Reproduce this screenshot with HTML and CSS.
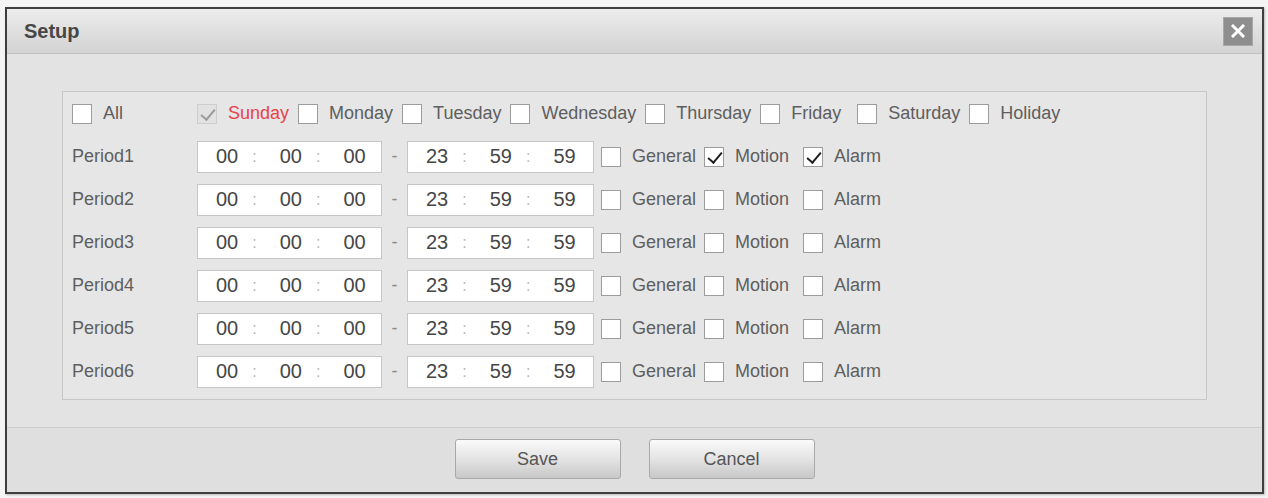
FILE: index.html
```html
<!DOCTYPE html>
<html lang="en">
<head>
    <meta charset="UTF-8">
    <title>Setup</title>
    <link rel="stylesheet" href="styles.css">
</head>
<body>
    <div class="dialog">
        <div class="dialog-head">
            <h1>Setup</h1>
            <button class="close-btn" type="button">
                <svg width="14" height="14" viewBox="0 0 14 14">
                    <path d="M2 2 L12 12 M12 2 L2 12" stroke="#fff" stroke-width="3" stroke-linecap="square"/>
                </svg>
            </button>
        </div>

        <div class="dialog-body">
            <div class="panel">
                <div class="row days">
                    <div class="row-label">
                        <label class="check-item"><span class="box"></span>All</label>
                    </div>
                    <label class="check-item"><span class="box disabled checked"></span><span class="today">Sunday</span></label>
                    <label class="check-item"><span class="box"></span>Monday</label>
                    <label class="check-item"><span class="box"></span>Tuesday</label>
                    <label class="check-item"><span class="box"></span>Wednesday</label>
                    <label class="check-item"><span class="box"></span>Thursday</label>
                    <label class="check-item wide"><span class="box"></span>Friday</label>
                    <label class="check-item"><span class="box"></span>Saturday</label>
                    <label class="check-item"><span class="box"></span>Holiday</label>
                </div>

                <div class="row">
                    <div class="row-label">Period1</div>
                    <div class="time-box"><span>00</span><i>:</i><span>00</span><i>:</i><span>00</span></div>
                    <div class="sep">-</div>
                    <div class="time-box"><span>23</span><i>:</i><span>59</span><i>:</i><span>59</span></div>
                    <label class="check-item first"><span class="box"></span>General</label>
                    <label class="check-item wide"><span class="box checked"></span>Motion</label>
                    <label class="check-item"><span class="box checked"></span>Alarm</label>
                </div>

                <div class="row">
                    <div class="row-label">Period2</div>
                    <div class="time-box"><span>00</span><i>:</i><span>00</span><i>:</i><span>00</span></div>
                    <div class="sep">-</div>
                    <div class="time-box"><span>23</span><i>:</i><span>59</span><i>:</i><span>59</span></div>
                    <label class="check-item first"><span class="box"></span>General</label>
                    <label class="check-item wide"><span class="box"></span>Motion</label>
                    <label class="check-item"><span class="box"></span>Alarm</label>
                </div>

                <div class="row">
                    <div class="row-label">Period3</div>
                    <div class="time-box"><span>00</span><i>:</i><span>00</span><i>:</i><span>00</span></div>
                    <div class="sep">-</div>
                    <div class="time-box"><span>23</span><i>:</i><span>59</span><i>:</i><span>59</span></div>
                    <label class="check-item first"><span class="box"></span>General</label>
                    <label class="check-item wide"><span class="box"></span>Motion</label>
                    <label class="check-item"><span class="box"></span>Alarm</label>
                </div>

                <div class="row">
                    <div class="row-label">Period4</div>
                    <div class="time-box"><span>00</span><i>:</i><span>00</span><i>:</i><span>00</span></div>
                    <div class="sep">-</div>
                    <div class="time-box"><span>23</span><i>:</i><span>59</span><i>:</i><span>59</span></div>
                    <label class="check-item first"><span class="box"></span>General</label>
                    <label class="check-item wide"><span class="box"></span>Motion</label>
                    <label class="check-item"><span class="box"></span>Alarm</label>
                </div>

                <div class="row">
                    <div class="row-label">Period5</div>
                    <div class="time-box"><span>00</span><i>:</i><span>00</span><i>:</i><span>00</span></div>
                    <div class="sep">-</div>
                    <div class="time-box"><span>23</span><i>:</i><span>59</span><i>:</i><span>59</span></div>
                    <label class="check-item first"><span class="box"></span>General</label>
                    <label class="check-item wide"><span class="box"></span>Motion</label>
                    <label class="check-item"><span class="box"></span>Alarm</label>
                </div>

                <div class="row">
                    <div class="row-label">Period6</div>
                    <div class="time-box"><span>00</span><i>:</i><span>00</span><i>:</i><span>00</span></div>
                    <div class="sep">-</div>
                    <div class="time-box"><span>23</span><i>:</i><span>59</span><i>:</i><span>59</span></div>
                    <label class="check-item first"><span class="box"></span>General</label>
                    <label class="check-item wide"><span class="box"></span>Motion</label>
                    <label class="check-item"><span class="box"></span>Alarm</label>
                </div>
            </div>
        </div>

        <div class="dialog-foot">
            <button class="btn" type="button">Save</button>
            <button class="btn" type="button">Cancel</button>
        </div>
    </div>
</body>
</html>
```

FILE: styles.css
```css
* {
    margin: 0;
    padding: 0;
    box-sizing: border-box;
}

body {
    font-family: "Liberation Sans", Arial, sans-serif;
    font-size: 18px;
    color: #5e5e5e;
    background: #f4f4f4;
    padding: 7px 4px 4px 5px;
}

.dialog {
    width: 1259px;
    height: 487px;
    border: 2px solid #3e3e3e;
    background: #e3e3e3;
    display: flex;
    flex-direction: column;
    box-shadow: 1px 1px 2px rgba(0, 0, 0, 0.25);
}

.dialog-head {
    height: 45px;
    flex-shrink: 0;
    display: flex;
    align-items: center;
    justify-content: space-between;
    padding: 0 9px 0 17px;
    background: linear-gradient(#ececec, #d3d3d3);
    border-bottom: 1px solid #c2c2c2;
}

.dialog-head h1 {
    font-size: 20px;
    font-weight: bold;
    color: #474747;
}

.close-btn {
    width: 30px;
    height: 29px;
    border: 1px solid #a8a8a8;
    background: #8e8e8e;
    display: flex;
    align-items: center;
    justify-content: center;
    cursor: pointer;
}

.dialog-body {
    padding: 37px 55px 27px 55px;
    flex: 1;
}

.panel {
    border: 1px solid #c7c7c7;
    background: #e6e6e6;
    padding-bottom: 6px;
}

.row {
    height: 43px;
    display: flex;
    align-items: center;
}

.row-label {
    width: 134px;
    padding-left: 9px;
    flex-shrink: 0;
}

.check-item {
    display: flex;
    align-items: center;
    gap: 11px;
    margin-right: 8px;
    white-space: nowrap;
}

.days .check-item {
    margin-right: 9px;
}

.days .check-item.wide {
    margin-right: 16px;
}

.check-item.wide {
    margin-right: 14px;
}

.check-item.first {
    margin-left: 7px;
}

.box {
    width: 20px;
    height: 20px;
    border: 1px solid #9c9c9c;
    background: #fff;
    position: relative;
    flex-shrink: 0;
}

.box.checked::before {
    content: "";
    position: absolute;
    left: 6px;
    top: 1px;
    width: 6px;
    height: 12px;
    border-right: 2px solid #1f1f1f;
    border-bottom: 2px solid #1f1f1f;
    transform: rotate(40deg);
}

.box.disabled {
    background: #e2e2e2;
    border-color: #cdcdcd;
}

.box.disabled.checked::before {
    border-color: #9a9a9a;
}

.today {
    color: #e8434a;
}

.time-box {
    width: 185px;
    height: 32px;
    border: 1px solid #c6c6c6;
    background: #fff;
    display: flex;
    align-items: center;
    padding-left: 18px;
    font-size: 20px;
    color: #464646;
}

.time-box + .sep + .time-box {
    width: 187px;
}

.time-box i {
    font-style: normal;
    font-size: 16px;
    color: #b5b5b5;
    margin: 0 23px 0 14px;
}

.sep {
    width: 25px;
    text-align: center;
    color: #8a8a8a;
}

.dialog-foot {
    height: 65px;
    flex-shrink: 0;
    border-top: 1px solid #cdcdcd;
    background: #dfdfdf;
    display: flex;
    justify-content: center;
    gap: 28px;
    padding-top: 11px;
}

.btn {
    width: 166px;
    height: 40px;
    border: 1px solid #a9a9a9;
    border-radius: 3px;
    background: linear-gradient(#fafafa, #e6e6e6 45%, #c8c8c8);
    font-family: "Liberation Sans", Arial, sans-serif;
    font-size: 18px;
    color: #555;
    cursor: pointer;
}
```
